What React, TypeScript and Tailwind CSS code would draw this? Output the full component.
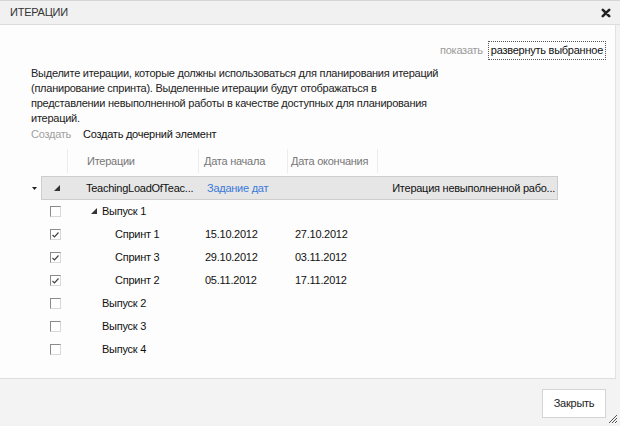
import React from 'react'

type Row = {
  level: 'release' | 'sprint'
  name: string
  start?: string
  end?: string
  checked?: boolean
  expanded?: boolean
}

const rows: Row[] = [
  { level: 'release', name: 'Выпуск 1', expanded: true },
  { level: 'sprint', name: 'Спринт 1', start: '15.10.2012', end: '27.10.2012', checked: true },
  { level: 'sprint', name: 'Спринт 3', start: '29.10.2012', end: '03.11.2012', checked: true },
  { level: 'sprint', name: 'Спринт 2', start: '05.11.2012', end: '17.11.2012', checked: true },
  { level: 'release', name: 'Выпуск 2' },
  { level: 'release', name: 'Выпуск 3' },
  { level: 'release', name: 'Выпуск 4' },
]

const cols = 'grid grid-cols-[27px_131px_89px_90px_180px] w-[517px]'

function Expanded() {
  return (
    <svg width="6" height="6" viewBox="0 0 6 6">
      <polygon points="6,0 6,6 0,6" fill="#333" />
    </svg>
  )
}

function Checkbox({ checked }: { checked?: boolean }) {
  return (
    <div className="w-[11px] h-[11px] bg-white border border-t-[#8a8a8a] border-l-[#8a8a8a] border-r-[#d8d8d8] border-b-[#d8d8d8] flex items-center justify-center">
      {checked && (
        <svg width="7" height="6" viewBox="0 0 7 6">
          <path d="M0.5 3 L2.5 5 L6.5 0.5" stroke="#444" strokeWidth="1.2" fill="none" />
        </svg>
      )}
    </div>
  )
}

export default function App() {
  return (
    <div
      className="w-[620px] h-[426px] flex flex-col bg-[#f3f3f3] text-[11px] tracking-[-0.25px] text-[#222] overflow-hidden relative"
      style={{ fontFamily: '"Liberation Sans", Arial, sans-serif' }}
    >
      {/* title */}
      <div className="h-[25px] flex items-center justify-between pl-[10px] pr-[9px] bg-[#f1f1f1] border-t border-t-[#d6d6d6] border-b border-b-[#dcdcdc]">
        <span className="text-[#333] text-[11px]">ИТЕРАЦИИ</span>
        <svg width="10" height="10" viewBox="0 0 10 10">
          <path d="M1.8 1.8 L8.2 8.2 M8.2 1.8 L1.8 8.2" stroke="#222" strokeWidth="2.6" strokeLinecap="round" />
        </svg>
      </div>

      {/* body */}
      <div className="flex-1 bg-[#fdfdfd] mr-[4px] border-r border-r-[#e2e2e2] flex flex-col border-b border-b-[#dedede]">
        <div className="flex justify-end items-center pt-[16px] pr-[9px] gap-[5px]">
          <span className="text-[#9a9a9a] text-[11px]">показать</span>
          <span className="h-[19px] px-[2px] flex items-center border border-dotted border-[#555] text-[11px] text-[#111]">
            развернуть выбранное
          </span>
        </div>

        <p className="ml-[31px] mt-[6px] w-[410px] leading-[15px] text-[#222]">
          Выделите итерации, которые должны использоваться для планирования итераций
          (планирование спринта). Выделенные итерации будут отображаться в представлении
          невыполненной работы в качестве доступных для планирования итераций.
        </p>

        <div className="ml-[31px] mt-[1px] h-[14px] flex items-center gap-[12px]">
          <span className="text-[#a0a0a0]">Создать</span>
          <span className="text-[#111]">Создать дочерний элемент</span>
        </div>

        {/* grid */}
        <div className="ml-[28px] mt-[8px] flex flex-col">
          <div className="flex h-[24px]">
            <div className="w-[13px]" />
            <div className={`${cols} text-[#777]`}>
              <div className="border-r border-r-[#ececec]" />
              <div className="pl-[19px] flex items-center border-r border-r-[#ececec]">Итерации</div>
              <div className="pl-[5px] flex items-center border-r border-r-[#ececec]">Дата начала</div>
              <div className="pl-[3px] flex items-center border-r border-r-[#ececec]">Дата окончания</div>
              <div />
            </div>
          </div>

          <div className="flex h-[24px] mt-[3px]">
            <div className="w-[13px] flex items-center justify-center">
              <svg width="5" height="3" viewBox="0 0 5 3">
                <polygon points="0,0 5,0 2.5,3" fill="#222" />
              </svg>
            </div>
            <div className={`${cols} bg-[#e6e6e6] border border-[#cdcdcd]`}>
              <div className="flex items-center pl-[12px]">
                <Expanded />
              </div>
              <div className="pl-[17px] flex items-center text-[#111] whitespace-nowrap">TeachingLoadOfTeac...</div>
              <div className="pl-[7px] flex items-center text-[#3a7ad9] whitespace-nowrap">Задание дат</div>
              <div />
              <div className="flex items-center justify-end pr-[4px] text-[#111] whitespace-nowrap">
                Итерация невыполненной рабо...
              </div>
            </div>
          </div>

          {rows.map((r) => (
            <div key={r.name} className="flex h-[23px]">
              <div className="w-[13px]" />
              <div className={cols}>
                <div className="flex items-center pl-[9px]">
                  <Checkbox checked={r.checked} />
                </div>
                <div
                  className={`flex items-center text-[#111] ${r.level === 'sprint' ? 'pl-[47px]' : 'pl-[34px]'} relative`}
                >
                  {r.expanded && (
                    <span className="absolute left-[23px] top-[8px]">
                      <Expanded />
                    </span>
                  )}
                  {r.name}
                </div>
                <div className="pl-[6px] flex items-center text-[#111]">{r.start}</div>
                <div className="pl-[7px] flex items-center text-[#111]">{r.end}</div>
                <div />
              </div>
            </div>
          ))}
        </div>
      </div>

      {/* footer */}
      <div className="h-[47px] flex justify-end items-start pt-[10px] pr-[14px]">
        <button className="w-[64px] h-[29px] bg-white border border-[#d4d4d4] text-[#222] text-[11px]">
          Закрыть
        </button>
      </div>

      <svg className="absolute right-[2px] bottom-[2px]" width="11" height="11" viewBox="0 0 11 11">
        <path d="M10 2 L2 10 M10 5 L5 10 M10 8 L8 10" stroke="#555" strokeWidth="1" />
      </svg>
    </div>
  )
}
